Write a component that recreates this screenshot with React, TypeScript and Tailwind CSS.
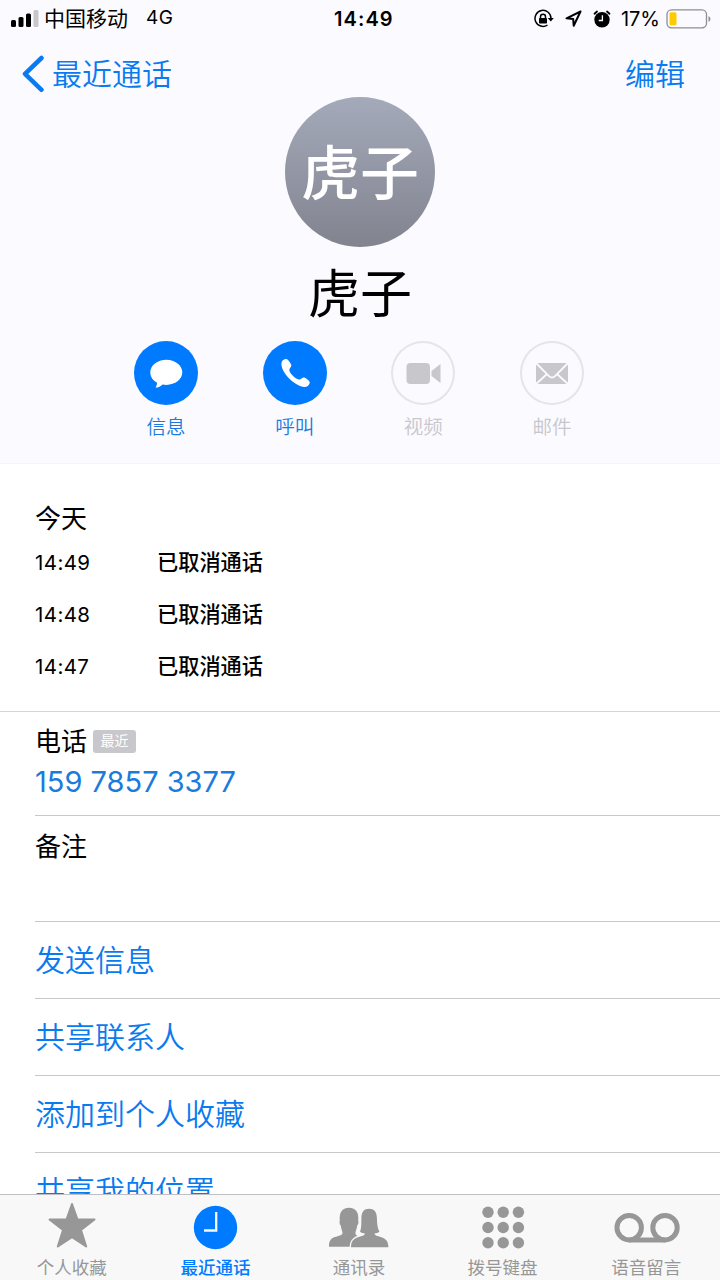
import React from 'react';
import { clsx } from 'clsx';

interface QuickAction {
    label: string;
    enabled: boolean;
    icon: React.ReactNode;
}

interface TabItem {
    label: string;
    icon: React.ReactNode;
}

const CALLS = [
    { time: '14:49', status: '已取消通话' },
    { time: '14:48', status: '已取消通话' },
    { time: '14:47', status: '已取消通话' },
];

const LINKS = ['发送信息', '共享联系人', '添加到个人收藏', '共享我的位置'];

const QUICK_ACTIONS: QuickAction[] = [
    {
        label: '信息',
        enabled: true,
        icon: (
            <svg className="size-16" viewBox="0 0 64 64" fill="currentColor">
                <path d="M32.3 18.7c-8.9 0-16 5.6-16 12.6 0 4.6 2.7 8.3 6.7 10.5 0 2-.6 3.300-1.500 4.800 3 0 5.200-1.100 7-3.100 1.200.3 2.500.4 3.800.4 8.900 0 16-5.600 16-12.600s-7.100-12.600-16-12.600z" />
            </svg>
        ),
    },
    {
        label: '呼叫',
        enabled: true,
        icon: (
            <svg className="size-16" viewBox="0 0 64 64" fill="currentColor">
                <path d="M19.600 19.500c1.300-1.200 2.800-1.700 4-1.500 1.100.3 4.400 4.400 4.700 6 .3 1.600-1.500 3-1.900 4.400-.5 1.800 1.400 4.300 3.700 6.600 2.400 2.300 5 4 6.800 3.500 1.400-.4 2.700-2.200 4.300-1.900 1.700.3 5.100 3.200 5.500 4.500.2 1.200-.5 2.700-1.900 4-2.600 2-7.500.8-13.200-3-3.700-2.500-7-5.800-9.600-9.600-3.400-5.200-4.800-10.400-2.400-13z" />
            </svg>
        ),
    },
    {
        label: '视频',
        enabled: false,
        icon: (
            <svg className="size-16" viewBox="0 0 64 64" fill="currentColor">
                <rect x="15.500" y="22" width="23.500" height="21" rx="4" />
                <path d="M40.500 30 49.500 23v19l-9-7z" />
            </svg>
        ),
    },
    {
        label: '邮件',
        enabled: false,
        icon: (
            <svg className="size-16" viewBox="0 0 64 64">
                <rect x="16" y="22" width="32" height="21" fill="currentColor" />
                <path
                    d="M15.500 21.500 29 35.200q3 2.800 6 0L48.500 21.500M15.500 43.500 27 33M48.500 43.500 37 33"
                    fill="none"
                    stroke="#fafaff"
                    strokeWidth="1.800"
                />
            </svg>
        ),
    },
];

const TABS: TabItem[] = [
    {
        label: '个人收藏',
        icon: (
            <path
                d="M36 9.500 41.500 25h17L45 35.500 50.200 52 36 42.700 21.800 52 27 35.500 13.500 25h17z"
                transform="translate(0 -.5)"
                fill="currentColor"
                stroke="currentColor"
                strokeWidth="2"
                strokeLinejoin="round"
            />
        ),
    },
    {
        label: '最近通话',
        icon: (
            <>
                <circle cx="36.500" cy="32.500" r="21.700" fill="currentColor" />
                <path d="M37.200 17v18.500H25" fill="none" stroke="#f8f8f8" strokeWidth="2.300" />
            </>
        ),
    },
    {
        label: '通讯录',
        icon: (
            <g fill="currentColor">
                <path d="M6 51.800c0-6 1.500-8.200 6-9.700 3.500-1.200 7.500-1.800 7.500-3.800 0-2.500-1.300-3.800-1.700-7.800-1.400-1.200-1.500-3.500-1-5-.7-8 2.200-12.800 9.200-12.800s10 4.800 9.200 12.800c.5 1.500.4 3.800-1 5-.4 4-1.700 5.300-1.700 7.800 0 2 1.500 2.500 5.500 3.800v9.700z" />
                <path
                    d="M28 52.200c.2-6 2.300-8.400 7.500-10.200 3.200-1 6.200-1.500 6.500-3.500-1.800-.3-3.600-.8-5-1.800 1.600-3.700 1.300-8 1.400-14 .2-6 2.600-9 7.800-9 5 0 7.500 3 7.700 9 .1 6 .5 10.300 2.500 14-1.400 1-3.200 1.500-5 1.800.3 2 3.300 2.500 6.500 3.500 5.200 1.800 7.300 4.200 7.500 10.200z"
                    stroke="#f8f8f8"
                    strokeWidth="3"
                    paintOrder="stroke"
                />
            </g>
        ),
    },
    {
        label: '拨号键盘',
        icon: [17.2, 32.5, 47.7].map(y =>
            [21, 36.2, 51.400].map(x => <circle key={`${x}-${y}`} cx={x} cy={y} r="5.700" fill="currentColor" />)
        ),
    },
    {
        label: '语音留言',
        icon: (
            <g fill="none" stroke="currentColor" strokeWidth="5">
                <circle cx="19.200" cy="32.700" r="12.200" />
                <circle cx="55" cy="32.700" r="12.200" />
                <path d="M19.200 44.900H55" />
            </g>
        ),
    },
];

const StatusBar = () => (
    <div className="flex h-9 items-center pl-[11px] pr-2 pt-px text-black">
        <svg className="h-5 w-7" viewBox="0 0 28 20">
            <rect x="0" y="11" width="5" height="7" rx="1.500" />
            <rect x="7.500" y="8" width="5" height="10" rx="1.500" />
            <rect x="15" y="4.500" width="5" height="13.500" rx="1.500" />
            <rect x="22.500" y="1" width="5" height="17" rx="1.500" fill="#c6c6cb" />
        </svg>
        <span className="ml-[5px] text-[21px]">中国移动</span>
        <span className="ml-[18px] w-[188px] text-[19px] tracking-[0.6px]">4G</span>
        <span className="text-[20px] font-semibold tracking-[1.1px]">14:49</span>
        <div className="ml-auto flex items-center">
            {/* rotation lock */}
            <svg className="h-5 w-5" viewBox="0 0 20 20" fill="none" stroke="currentColor" strokeWidth="1.500">
                <path d="M13.500 16A8 8 0 1 1 17 9.500" />
                <path d="M13.800 9h6l-3 3.500z" fill="currentColor" stroke="none" />
                <rect x="5" y="9" width="8" height="5.500" rx=".8" fill="currentColor" stroke="none" />
                <path d="M6.500 9.500V7.700a2.500 2.500 0 0 1 5 0v1.800" />
            </svg>
            <svg className="ml-[11px] h-[17px] w-[17px]" viewBox="0 0 17 17" fill="none" stroke="currentColor" strokeWidth="2" strokeLinejoin="round">
                <path d="M15.500 1.500 1.500 8.300l6.700.6.500 6.800z" />
            </svg>
            {/* alarm */}
            <svg className="ml-[11px] h-[18px] w-[18px]" viewBox="0 0 18 18">
                <circle cx="9" cy="9.700" r="7.700" />
                <path d="M1.500 3.700 4 1.500M16.500 3.700 14 1.500" stroke="currentColor" strokeWidth="1.800" strokeLinecap="round" />
                <path d="M9.400 5.300v5.200H5.700" fill="none" stroke="#fafaff" strokeWidth="1.300" />
            </svg>
            <span className="ml-[10px] text-[20px]">17%</span>
            <svg className="ml-1.5 h-5 w-[46px]" viewBox="0 0 46 20">
                <rect x="1" y=".8" width="39.500" height="18" rx="4.500" fill="none" stroke="#8e8e93" strokeWidth="1.300" />
                <rect x="3.500" y="3.300" width="7" height="13" rx="1.500" fill="#fdcc00" />
                <path d="M42.500 7v6q2-.8 2-3t-2-3" fill="#8e8e93" />
            </svg>
        </div>
    </div>
);

const Header = () => (
    <header className="flex h-[464px] shrink-0 flex-col border-b border-[#f5f5f9] bg-[#fafaff]">
        <StatusBar />
        <div className="flex h-[61px] items-start justify-between pl-[22px] pr-[35px] pt-[15px] text-[30px] leading-[46px] text-[#0a7aef]">
            <button type="button" className="flex items-center">
                <svg className="h-[38px] w-[22px]" viewBox="0 0 22 38" fill="none" stroke="currentColor" strokeWidth="4.500" strokeLinecap="round" strokeLinejoin="round">
                    <path d="M19.500 3 3 18.800l16.500 16" />
                </svg>
                <span className="ml-2 font-[350]">最近通话</span>
            </button>
            <button type="button" className="font-[350]">编辑</button>
        </div>
        <div className="flex size-[150px] items-center justify-center self-center rounded-full bg-linear-to-b from-[#a4aaba] to-[#82838f] pt-1 text-[59px] font-medium text-white">
            虎子
        </div>
        <h1 className="mt-2 text-center text-[52px] leading-[80px]">虎子</h1>
        <div className="mt-1.5 flex justify-center gap-[64.600px] pr-[2px]">
            {QUICK_ACTIONS.map(action => (
                <div
                    key={action.label}
                    className={clsx('flex flex-col items-center', action.enabled ? 'text-[#1a7bdc]' : 'text-[#c7c7cc]')}
                >
                    <div
                        className={clsx(
                            'flex size-16 items-center justify-center rounded-full',
                            action.enabled ? 'bg-[#007aff] text-white' : 'shadow-[inset_0_0_0_2px_#e4e4e9]'
                        )}
                    >
                        {action.icon}
                    </div>
                    <span className="mt-[7px] text-[19.500px] leading-[30px] font-[350]">{action.label}</span>
                </div>
            ))}
        </div>
    </header>
);

const App = () => {
    return (
        <div className="flex h-[1280px] w-[720px] flex-col overflow-hidden bg-white font-[Inter,'Noto_Sans_CJK_SC',sans-serif] text-black">
            <Header />

            <main className="min-h-0 flex-1 overflow-hidden">
                {/* Call history */}
                <section className="h-[248px] border-b border-[#d5d5d8] pl-[35px] pt-[35px]">
                    <h2 className="text-[26px] leading-[39px]">今天</h2>
                    {CALLS.map(call => (
                        <div key={call.time} className="flex h-[52px] items-center text-[21.200px] first-of-type:-mt-px">
                            <span className="w-[122px] text-[20.500px] tracking-[0.4px]">{call.time}</span>
                            <span className="font-medium">{call.status}</span>
                        </div>
                    ))}
                </section>

                <div className="pl-[35px]">
                    <section className="h-[104px] border-b border-[#c8c7cc] pt-[11px]">
                        <div className="flex items-center text-[26px] leading-[38px]">
                            电话
                            <span className="mb-0.5 ml-1.5 flex h-[23px] w-[43px] items-center justify-center rounded-[3px] bg-[#c7c7cc] text-[14px] text-white">
                                最近
                            </span>
                        </div>
                        <p className="text-[29px] leading-[42px] text-[#1a7bdc]">159 7857 3377</p>
                    </section>
                    <section className="h-[106px] border-b border-[#c8c7cc] pt-3 text-[26px] leading-[38px]">备注</section>
                    {LINKS.map(link => (
                        <button
                            key={link}
                            type="button"
                            className="flex h-[77px] w-full items-center border-b border-[#c8c7cc] text-[30px] font-[350] text-[#0a7aef]"
                        >
                            {link}
                        </button>
                    ))}
                </div>
            </main>

            <nav className="grid h-[86px] shrink-0 grid-cols-5 border-t border-[#c0c0c4] bg-[#f8f8f8] pr-[2px]">
                {TABS.map(tab => (
                    <button
                        key={tab.label}
                        type="button"
                        className={clsx(
                            'flex flex-col items-center text-[17.500px] leading-[24px]',
                            tab.label === '最近通话' ? 'font-medium text-[#007aff]' : 'text-[#979797]'
                        )}
                    >
                        <svg className="h-[60px] w-[72px]" viewBox="0 0 72 60">
                            {tab.icon}
                        </svg>
                        <span className="mt-px">{tab.label}</span>
                    </button>
                ))}
            </nav>
        </div>
    );
};

export default App;
